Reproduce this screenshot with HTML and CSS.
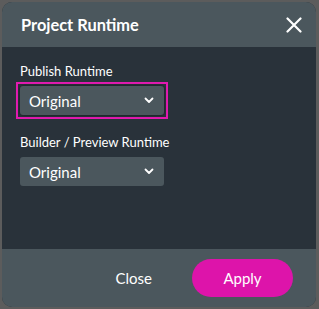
FILE: index.html
```html
<!DOCTYPE html>
<html lang="en">
<head>
  <meta charset="UTF-8">
  <title>Project Runtime</title>
  <link rel="stylesheet" href="styles.css">
</head>
<body>
  <div class="modal">
    <div class="modal-header">
      <h1>Project Runtime</h1>
      <button class="close-x" aria-label="Close">
        <svg width="16" height="16" viewBox="0 0 16 16"><path d="M1.5 1.5 L14.5 14.5 M14.5 1.5 L1.5 14.5" stroke="#fff" stroke-width="2.2" stroke-linecap="round"/></svg>
      </button>
    </div>
    <div class="modal-body">
      <div class="field">
        <label>Publish Runtime</label>
        <div class="focus-ring">
          <div class="select">
            <span>Original</span>
            <svg width="10" height="7" viewBox="0 0 10 7"><path d="M1.5 1.5 L5 5 L8.5 1.5" fill="none" stroke="#fff" stroke-width="1.8" stroke-linecap="round" stroke-linejoin="round"/></svg>
          </div>
        </div>
      </div>
      <div class="field">
        <label>Builder / Preview Runtime</label>
        <div class="select">
          <span>Original</span>
          <svg width="10" height="7" viewBox="0 0 10 7"><path d="M1.5 1.5 L5 5 L8.5 1.5" fill="none" stroke="#fff" stroke-width="1.8" stroke-linecap="round" stroke-linejoin="round"/></svg>
        </div>
      </div>
    </div>
    <div class="modal-footer">
      <button class="btn-close">Close</button>
      <button class="btn-apply">Apply</button>
    </div>
  </div>
</body>
</html>
```

FILE: styles.css
```css
body {
  margin: 0;
  padding: 2px 3px 2px 2px;
  background-color: #5c5c5c;
  font-family: 'Lato', 'Open Sans', sans-serif;
  color: #fff;
}
.modal {
  height: 305px;
  border-radius: 10px;
  overflow: hidden;
  display: flex;
  flex-direction: column;
  background-color: #29323a;
}
.modal-header {
  height: 45px;
  background-color: #4b575d;
  display: flex;
  align-items: center;
  justify-content: space-between;
  padding: 0 14px 0 19px;
}
.modal-header h1 {
  margin: 0;
  font-size: 16.4px;
  font-weight: 700;
}
.close-x {
  background: none;
  border: none;
  padding: 0;
  display: flex;
  cursor: pointer;
}
.modal-body {
  flex: 1;
  padding: 16px 0 0 18px;
}
.field {
  margin-bottom: 19px;
}
.field label {
  display: block;
  font-size: 13px;
  line-height: 16px;
  margin-bottom: 7px;
}
.focus-ring {
  width: 144px;
  margin: -4px 0 -4px -4px;
  padding: 2px;
  border: 2px solid #e11bb0;
}
.select {
  width: 144px;
  box-sizing: border-box;
  height: 29px;
  background-color: #4b575d;
  border-radius: 3px;
  display: flex;
  align-items: center;
  justify-content: space-between;
  padding: 0 10px 0 9px;
  font-size: 15px;
}
.focus-ring .select {
  box-shadow: 0 0 3px rgba(0, 0, 0, 0.5);
}
.modal-footer {
  height: 58px;
  background-color: #4b575d;
  display: flex;
  align-items: center;
  justify-content: flex-end;
  gap: 40px;
  padding: 0 23px 0 0;
}
.btn-close {
  background: none;
  border: none;
  color: #fff;
  font-family: inherit;
  font-size: 15px;
  padding: 0;
}
.btn-apply {
  width: 101px;
  height: 38px;
  border: none;
  border-radius: 19px;
  background-color: #dd14aa;
  color: #fff;
  font-family: inherit;
  font-size: 15px;
}
```
